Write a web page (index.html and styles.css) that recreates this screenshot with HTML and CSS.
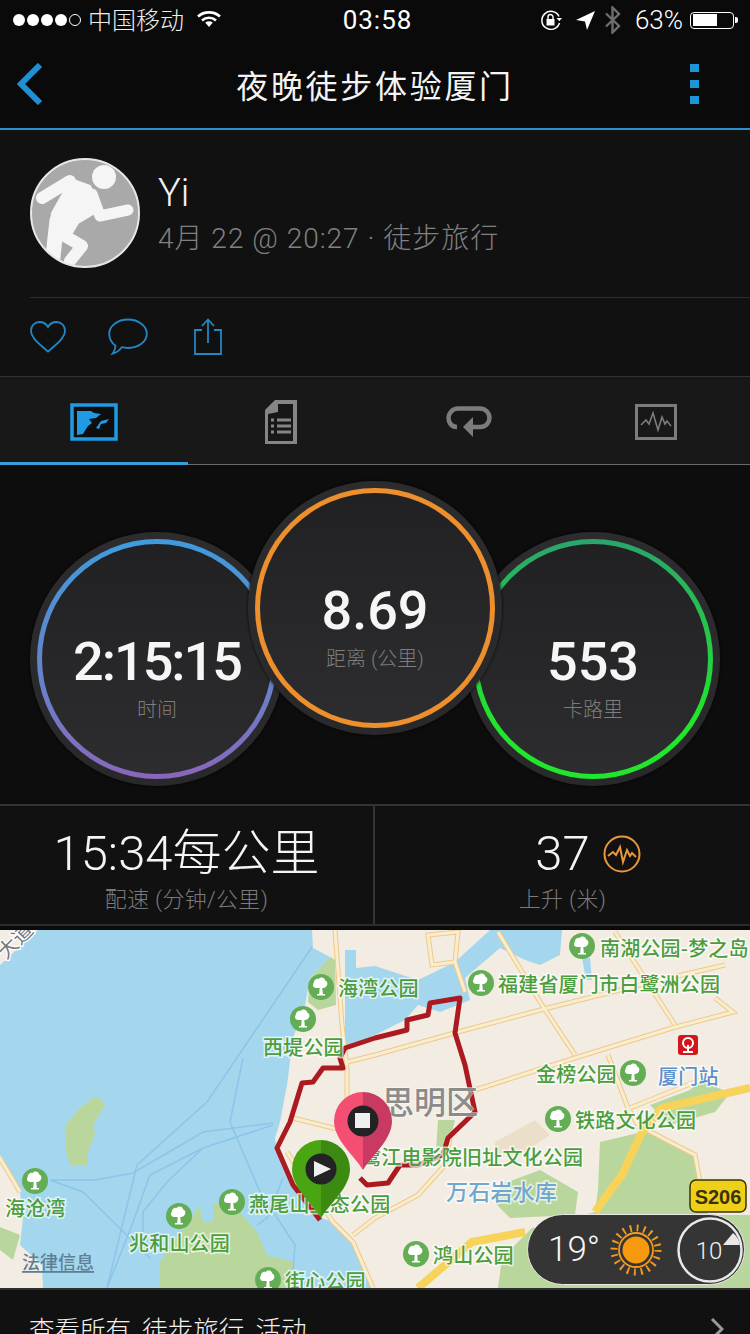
FILE: index.html
```html
<!DOCTYPE html>
<html lang="zh-CN">
<head>
  <meta charset="UTF-8" />
  <title>夜晚徒步体验厦门</title>
  <link rel="stylesheet" href="styles.css">
</head>
<body>
<div class="page">

  <div class="status-bar">
    <div class="status-left">
      <div class="signal"><i></i><i></i><i></i><i></i><i class="off"></i></div>
      <span class="carrier">中国移动</span>
      <svg class="wifi" width="24" height="18" viewBox="0 0 24 18"><path d="M1 6.5C7 1 17 1 23 6.5M5 10.5c4-3.6 10-3.6 14 0" fill="none" stroke="#fff" stroke-width="2.6"/><path d="M8.2 12.6c2.2-1.7 5.4-1.7 7.6 0L12 17z" fill="#fff"/></svg>
    </div>
    <div class="clock">03:58</div>
    <div class="status-right">
      <svg width="23" height="20" viewBox="0 0 23 20"><path d="M19 6.5A9 9 0 1 0 19.5 13" fill="none" stroke="#fff" stroke-width="1.5"/><path d="M16.5 8h5.5l-2.700 3.200z" fill="#fff"/><rect x="6.5" y="9" width="8" height="6.5" fill="#fff"/><path d="M8 9V7a2.5 2.5 0 0 1 5 0v2" fill="none" stroke="#fff" stroke-width="1.4"/></svg>
      <svg class="loc" width="19" height="19" viewBox="0 0 19 19"><path d="M19 0L0 9l9 1.5L11 19z" fill="#fff"/></svg>
      <svg class="bt" width="17" height="28" viewBox="0 0 17 28"><path d="M2 7.5l13 12.500-6.500 6.500V1.500L15 8 2 20.500" fill="none" stroke="#6e6e6e" stroke-width="2.4"/></svg>
      <span class="battery-pct">63%</span>
      <div class="battery"><div class="battery-fill"></div></div>
    </div>
  </div>

  <div class="nav-bar">
    <svg class="back" width="26" height="42" viewBox="0 0 26 42"><path d="M23 2L4 21l19 19" fill="none" stroke="#1f8fd6" stroke-width="6"/></svg>
    <h1 class="nav-title">夜晚徒步体验厦门</h1>
    <div class="kebab"><i></i><i></i><i></i></div>
  </div>

  <div class="profile">
    <div class="user-row">
      <svg class="avatar" width="110" height="110" viewBox="0 0 110 110">
        <defs><clipPath id="avatarClip"><circle cx="55" cy="55" r="54"/></clipPath></defs>
        <circle cx="55" cy="55" r="54" fill="#a9a9a9"/>
        <g class="runner" clip-path="url(#avatarClip)" fill="#f5f5f5" stroke="#f5f5f5" stroke-linecap="round" stroke-linejoin="round">
          <circle cx="74" cy="19" r="12" stroke="none"/>
          <path d="M38 20l22 8 10 24-22 13-6 10H20l2-20 13-23z" stroke-width="2"/>
          <path d="M12 40l28-17" fill="none" stroke-width="12"/>
          <path d="M70 58l28-6M62 36l8 22" fill="none" stroke-width="11"/>
          <path d="M33 77l19 11-12 15" fill="none" stroke-width="12"/>
          <path d="M27 62l-5 46" fill="none" stroke-width="15"/>
        </g>
        <circle cx="55" cy="55" r="54" fill="none" stroke="#e6e6e6" stroke-width="2"/>
      </svg>
      <div class="user-text">
        <div class="user-name">Yi</div>
        <div class="user-meta">4月 22 @ 20:27 · 徒步旅行</div>
      </div>
    </div>
    <div class="actions">
      <svg width="36" height="32" viewBox="0 0 36 32"><path d="M18 30.5C10 23.5 1 17 1 9.5 1 4.5 5 1 9.5 1c3.5 0 6.7 1.8 8.5 5 1.8-3.2 5-5 8.5-5C31 1 35 4.5 35 9.5c0 7.5-9 14-17 21z" fill="none" stroke="#2387c4" stroke-width="1.8"/></svg>
      <svg width="40" height="37" viewBox="0 0 40 37"><path d="M20 1.5c10.5 0 18.800 6.500 18.800 14.300S30.500 30 20 30c-2.200 0-4.300-.3-6.200-.8-2 2.700-5 5.300-9.300 6.500 1.800-2.300 2.900-5 3-8C3.800 25 1.200 20.600 1.200 15.800 1.200 8 9.500 1.500 20 1.500z" fill="none" stroke="#2387c4" stroke-width="1.8"/></svg>
      <svg width="36" height="37" viewBox="0 0 36 37"><path d="M12 12H5v24h26V12h-7" fill="none" stroke="#2387c4" stroke-width="1.8"/><path d="M18 25V2M12 8l6-6.500L24 8" fill="none" stroke="#2387c4" stroke-width="1.8"/></svg>
    </div>
  </div>

  <div class="tabs">
    <div class="tab active">
      <svg width="48" height="38" viewBox="0 0 48 38"><rect x="2" y="2" width="44" height="34" fill="#0e0e0f" stroke="#1e9be2" stroke-width="3.5"/><path d="M7 8h14l3 2 7 1-5 4-7 1 3 4-4 3-2 3-3 5-6 1z" fill="#1e9be2"/><path d="M26 25l5-7 8-2-3 4-5 1-2 5z" fill="#1e9be2"/></svg>
    </div>
    <div class="tab">
      <svg width="32" height="44" viewBox="0 0 32 44"><path d="M10 0h22v44H0V10z" fill="#858585"/><path d="M13 4h15v37H3V14l10-2z" fill="#171718"/><rect x="6" y="18.5" width="3" height="3" fill="#858585"/><rect x="6" y="24.5" width="3" height="3" fill="#858585"/><rect x="6" y="30.5" width="3" height="3" fill="#858585"/><rect x="12" y="18.5" width="14" height="3" fill="#858585"/><rect x="12" y="24.5" width="14" height="3" fill="#858585"/><rect x="12" y="30.5" width="14" height="3" fill="#858585"/></svg>
    </div>
    <div class="tab">
      <svg width="46" height="32" viewBox="0 0 46 32"><path d="M11 21C5 21 2.5 16 2.5 12S6 2.500 12 2.500h22c6 0 9.500 5 9.500 9.500S40 21 34 21h-9" fill="none" stroke="#7c7c7c" stroke-width="4.5"/><path d="M27 11v20L17 21z" fill="#7c7c7c"/></svg>
    </div>
    <div class="tab">
      <svg width="42" height="36" viewBox="0 0 42 36"><rect x="1.5" y="1.5" width="39" height="33" fill="none" stroke="#7c7c7c" stroke-width="3"/><path d="M6 21l5-5 3 4 4-11 5 17 4-13 3 7 2-3 4 5" fill="none" stroke="#7c7c7c" stroke-width="1.6"/></svg>
    </div>
  </div>

  <div class="rings">
    <div class="ring-wrap side">
      <div class="ring ring-blue">
        <div class="ring-inner">
          <div class="ring-value time-value">2:15:15</div>
          <div class="ring-label">时间</div>
        </div>
      </div>
    </div>
    <div class="ring-wrap center">
      <div class="ring ring-orange">
        <div class="ring-inner">
          <div class="ring-value">8.69</div>
          <div class="ring-label">距离 (公里)</div>
        </div>
      </div>
    </div>
    <div class="ring-wrap side">
      <div class="ring ring-green">
        <div class="ring-inner">
          <div class="ring-value">553</div>
          <div class="ring-label">卡路里</div>
        </div>
      </div>
    </div>
  </div>

  <div class="stats">
    <div class="stat">
      <div class="stat-value">15:34每公里</div>
      <div class="stat-label">配速 (分钟/公里)</div>
    </div>
    <div class="stat">
      <div class="stat-value"><span class="stat-number">37
        <svg class="stat-icon" width="38" height="38" viewBox="0 0 38 38"><circle cx="19" cy="19" r="17.5" fill="none" stroke="#e8983a" stroke-width="2"/><path d="M5 21l5-4 3 3 4-8 3 15 4-12 3 6 2-3 4 4" fill="none" stroke="#e8983a" stroke-width="2"/></svg>
      </span></div>
      <div class="stat-label">上升 (米)</div>
    </div>
  </div>

  <div class="map">
    <svg class="map-canvas" width="750" height="358" viewBox="0 0 750 358">
      <rect width="750" height="358" fill="#a4d7ee"/>

      <!-- land -->
      <path class="land" d="M312 0L313 18 330 27 310 48 305 75 293 108 287 155 280 192 275 208 277 222 293 255 313 285 333 292 353 312 373 358H750V0z"/>
      <path class="land" d="M0 0H38L0 35z"/>
      <path class="land" d="M0 225L20 262 23 288 20 315 42 335 43 358H0z"/>
      <path class="green" d="M0 297L20 305 13 330 0 320z"/>

      <!-- water inside the city -->
      <path class="water" d="M345 20L356 20 356 38 375 36 418 50 455 32 490 0 522 0 562 0 560 25 540 35 525 30 500 18 465 48 470 70 440 82 418 75 405 90 375 105 345 118z"/>
      <path class="water" d="M582 28L590 28 592 50 586 50z"/>

      <!-- parks -->
      <path class="green" d="M100 168L105 175 93 195 95 205 88 222 87 235 70 235 65 218 65 195 80 178 93 168z"/>
      <path class="green" d="M160 358L160 332 173 312 187 295 200 275 202 292 213 292 213 272 240 282 257 302 267 325 293 332 293 358z"/>
      <path class="green" d="M310 48L330 27 335 30 336 75 318 80 308 72z"/>
      <path class="green" d="M600 212L642 202 650 202 695 225 700 252 708 285 750 285V358H498L502 328 532 298 595 282 598 260z"/>
      <path class="green" d="M650 175L690 160 700 150 730 163 715 182 670 195z"/>
      <path class="green" d="M500 255L540 240 578 262 575 285 510 288 497 275z"/>
      <path class="green" d="M438 190L455 190 450 210 436 222z"/>
      <path class="tan" d="M495 212L535 190 550 205 520 225 495 225z"/>

      <!-- sea lanes -->
      <path class="lane" d="M312 17L207 172 137 235 107 358"/>
      <path class="lane" d="M243 128L230 192 260 262 295 315 293 342"/>
      <path class="lane" d="M50 250L95 250 133 243 203 202 273 193"/>
      <path class="lane" d="M50 250L83 262 150 328"/>
      <path class="lane" d="M273 195L203 218 150 245 132 295 107 358"/>
      <path class="lane" d="M283 248L267 288 257 295"/>
      <path class="lane" d="M143 305L143 282 167 252 203 218"/>

      <!-- roads -->
      <g class="road-outline">
        <path d="M347 132L375 125 458 102 548 78 660 50 725 35"/>
        <path d="M475 160L578 127 672 98 733 82 715 68"/>
        <path d="M335 0L342 95 347 138 347 170"/>
        <path d="M293 188L333 198 347 200"/>
        <path d="M287 222L333 292 353 312 373 358"/>
        <path d="M353 305L375 288 418 265 445 235 450 208"/>
        <path d="M455 32L465 62"/>
        <path d="M498 2L542 75 575 125"/>
        <path d="M608 125L628 178 642 202"/>
        <path d="M615 2L675 95"/>
        <path d="M428 5L458 2 455 32 432 35z"/>
        <path d="M647 200L695 225 700 252"/>
        <path d="M0 228L20 262"/>
        <path d="M630 178L700 150"/>
      </g>
      <g class="road-inner">
        <path d="M347 132L375 125 458 102 548 78 660 50 725 35"/>
        <path d="M475 160L578 127 672 98 733 82 715 68"/>
        <path d="M335 0L342 95 347 138 347 170"/>
        <path d="M293 188L333 198 347 200"/>
        <path d="M287 222L333 292 353 312 373 358"/>
        <path d="M353 305L375 288 418 265 445 235 450 208"/>
        <path d="M455 32L465 62"/>
        <path d="M498 2L542 75 575 125"/>
        <path d="M608 125L628 178 642 202"/>
        <path d="M615 2L675 95"/>
        <path d="M428 5L458 2 455 32 432 35z"/>
        <path d="M647 200L695 225 700 252"/>
        <path d="M0 228L20 262"/>
        <path d="M630 178L700 150"/>
      </g>
      <g class="highway">
        <path d="M750 158L662 178 642 202 622 245 602 272 595 282"/>
        <path d="M418 358L472 312 525 302"/>
      </g>
      <text class="road-text" transform="translate(6 30) rotate(-45)">大道</text>

      <!-- route -->
      <path class="route" d="M320 290L293 255 277 218 290 192 302 153 313 152 323 138 343 138 340 128 345 118 375 108 407 100 407 90 428 85 430 73 460 68 455 103 465 135 475 182 448 208 443 225 418 235 400 235 388 253 367 255 360 248"/>

      <!-- labels -->
      <text class="place" x="338" y="57">海湾公园</text>
      <text class="place" x="263" y="116">西堤公园</text>
      <text class="place" x="5" y="277">海沧湾</text>
      <text class="place" x="249" y="273">燕尾山生态公园</text>
      <text class="place" x="129" y="312">兆和山公园</text>
      <text class="place" x="285" y="350">街心公园</text>
      <text class="place" x="600" y="17">南湖公园-梦之岛</text>
      <text class="place" x="498" y="53">福建省厦门市白鹭洲公园</text>
      <text class="place" x="536" y="143">金榜公园</text>
      <text class="place" x="575" y="189">铁路文化公园</text>
      <text class="place" x="361" y="226">鹭江电影院旧址文化公园</text>
      <text class="place" x="433" y="324">鸿山公园</text>
      <text class="place blue-place" x="658" y="145">厦门站</text>
      <text class="place lake-place" x="446" y="260">万石岩水库</text>
      <text class="district" x="382" y="170">思明区</text>
      <text class="legal" x="22" y="331">法律信息</text>

      <!-- park markers -->
      <defs>
        <g id="park">
          <circle r="13" fill="#63ad55"/>
          <path d="M-1.3 1h-3.500c-3 0-4-3-2.500-5 0-3 3-5 5-4 2-2.500 6-1.500 6.500 1.500 2.500 1 3 4 1 6-1 1-2.500 1.500-4 1.500H1.300L1.800 7H4v1.500h-8V7h2.200z" fill="#fff"/>
        </g>
      </defs>
      <use href="#park" x="321" y="57"/>
      <use href="#park" x="303" y="89"/>
      <use href="#park" x="35" y="251"/>
      <use href="#park" x="232" y="272"/>
      <use href="#park" x="179" y="286"/>
      <use href="#park" x="268" y="350"/>
      <use href="#park" x="582" y="16"/>
      <use href="#park" x="481" y="53"/>
      <use href="#park" x="633" y="143"/>
      <use href="#park" x="558" y="189"/>
      <use href="#park" x="416" y="324"/>

      <!-- railway station -->
      <rect x="678" y="105" width="20" height="20" rx="3" fill="#d3151e"/>
      <circle cx="688" cy="113" r="5" fill="none" stroke="#fff" stroke-width="2"/>
      <path d="M688 115v6M683 122h10" stroke="#fff" stroke-width="2" fill="none"/>

      <!-- road sign -->
      <rect x="690" y="250" width="56" height="32" rx="6" fill="#efd019" stroke="#3b3208" stroke-width="1.5"/>
      <text class="sign" x="718" y="267">S206</text>

      <!-- end pin -->
      <path d="M363 162a29 29 0 0 0-29 29c0 19 20 34 29 49z" fill="#f44f73"/>
      <path d="M363 162a29 29 0 0 1 29 29c0 19-20 34-29 49z" fill="#c93a62"/>
      <circle cx="363" cy="191" r="15.5" fill="#232326"/>
      <rect x="355" y="183" width="15" height="15" fill="#efefef"/>

      <!-- start pin -->
      <path d="M321 210a29 29 0 0 0-29 29c0 19 20 34 29 49z" fill="#49a512"/>
      <path d="M321 210a29 29 0 0 1 29 29c0 19-20 34-29 49z" fill="#3c8a12"/>
      <circle cx="321" cy="239" r="15.5" fill="#232326"/>
      <path d="M314 231v16l17-8z" fill="#efefef"/>
    </svg>

    <div class="weather">
      <span class="temp">19°</span>
      <svg class="sun" width="52" height="52" viewBox="0 0 52 52">
        <circle cx="26" cy="26" r="22" fill="none" stroke="#f19a1e" stroke-width="7" stroke-dasharray="1.9 5.011"/>
        <circle cx="26" cy="26" r="17" fill="#353535" stroke="#f19a1e" stroke-width="1.8"/>
        <circle cx="26" cy="26" r="13.5" fill="#f6990f"/>
      </svg>
      <svg class="dial" width="68" height="68" viewBox="0 0 68 68">
        <path d="M47 29H64C63 24 61 20 57 17z" fill="#e8e8e8"/>
        <circle cx="34" cy="34" r="31.5" fill="none" stroke="#e8e8e8" stroke-width="2.5"/>
        <text class="dial-text" x="33" y="35">10</text>
      </svg>
    </div>
  </div>

  <div class="footer-link">
    <span class="footer-text">查看所有 徒步旅行 活动</span>
    <svg class="footer-arrow" width="14" height="24" viewBox="0 0 14 24"><path d="M2 2l10 10L2 22" fill="none" stroke="#9a9a9a" stroke-width="3"/></svg>
  </div>

</div>
</body>
</html>
```

FILE: styles.css
```css
html, body {
  margin: 0;
  padding: 0;
  background: #0a0a0b;
}

.page {
  width: 750px;
  height: 1334px;
  overflow: hidden;
  background: #0a0a0b;
  color: #fff;
  font-family: "Roboto", "Noto Sans CJK SC", sans-serif;
}

svg {
  display: block;
}

/* status bar */

.status-bar {
  height: 40px;
  display: grid;
  grid-template-columns: 1fr auto 1fr;
  align-items: center;
  padding: 0 16px 0 13px;
  font-size: 24px;
}

.status-left {
  display: flex;
  align-items: center;
}

.signal {
  display: flex;
  gap: 2px;
  margin-right: 7px;
}

.signal i {
  width: 12px;
  height: 12px;
  border-radius: 50%;
  background: #fff;
  box-sizing: border-box;
}

.signal i.off {
  background: none;
  border: 1.5px solid #fff;
}

.carrier {
  font-weight: 300;
  color: #eee;
  margin-top: -3px;
}

.wifi {
  margin-left: 13px;
  margin-top: -2px;
}

.clock {
  font-size: 26px;
  letter-spacing: 1px;
  margin-left: 8px;
  margin-top: -1px;
}

.status-right {
  display: flex;
  align-items: center;
  justify-content: flex-end;
}

.loc {
  margin-left: 13px;
}

.bt {
  margin-left: 9px;
}

.battery-pct {
  margin-left: 14px;
  font-size: 26px;
  font-weight: 300;
}

.battery {
  position: relative;
  width: 44px;
  height: 17px;
  margin-left: 7px;
  border: 1.5px solid #fff;
  border-radius: 4px;
  box-sizing: border-box;
  padding: 1.5px;
}

.battery::after {
  content: "";
  position: absolute;
  right: -5px;
  top: 4px;
  width: 3px;
  height: 6px;
  background: #fff;
  border-radius: 0 2px 2px 0;
}

.battery-fill {
  width: 63%;
  height: 100%;
  background: #fff;
}

/* nav */

.nav-bar {
  height: 88px;
  display: grid;
  grid-template-columns: 1fr auto 1fr;
  align-items: center;
  padding: 0 51px 0 17px;
  border-bottom: 2px solid #2a8fce;
}

.nav-title {
  margin: 0 0 0 34px;
  font-size: 32px;
  font-weight: 400;
  letter-spacing: 2.7px;
  color: #f4f4f4;
}

.kebab {
  display: flex;
  flex-direction: column;
  gap: 8px;
  justify-self: end;
}

.kebab i {
  width: 9px;
  height: 8px;
  background: #1f93d8;
}

/* profile */

.profile {
  height: 247px;
  background: #111112;
  border-bottom: 1px solid #333;
  box-sizing: border-box;
  padding: 28px 0 0 30px;
}

.user-row {
  display: flex;
  align-items: flex-start;
  height: 139px;
  border-bottom: 1px solid #2c2c2c;
}

.user-text {
  margin-left: 18px;
  padding-top: 13px;
}

.user-name {
  font-size: 38px;
  font-weight: 300;
  line-height: 44px;
  color: #f2f2f2;
}

.user-meta {
  margin-top: 6px;
  font-size: 28px;
  font-weight: 300;
  line-height: 36px;
  letter-spacing: 1px;
  color: #808080;
}

.actions {
  display: flex;
  align-items: center;
  gap: 42px;
  padding-top: 20px;
}

/* tabs */

.tabs {
  height: 88px;
  display: grid;
  grid-template-columns: repeat(4, 1fr);
  background: #181819;
  border-bottom: 1px solid #6a6a6a;
  box-sizing: border-box;
}

.tab {
  display: flex;
  align-items: center;
  justify-content: center;
  padding-top: 3px;
}

.tab.active {
  box-shadow: 0 1px 0 #3a9ede, inset 0 -2px 0 #3a9ede;
}

/* rings */

.rings {
  height: 339px;
  box-sizing: border-box;
  padding-top: 16px;
  display: flex;
  justify-content: center;
  align-items: flex-start;
  background: #0d0d0e;
}

.ring-wrap {
  width: 254px;
  height: 254px;
  box-sizing: border-box;
  padding: 7px;
  border-radius: 50%;
  background: linear-gradient(#2c2c2e, #29292b);
  box-shadow: 0 0 3px #000;
  flex: none;
}

.ring-wrap.side {
  margin-top: 51px;
}

.ring-wrap.center {
  margin: 0 -36px;
  position: relative;
  z-index: 2;
}

.ring {
  width: 100%;
  height: 100%;
  box-sizing: border-box;
  padding: 5px;
  border-radius: 50%;
}

.ring-blue {
  background: linear-gradient(#3f9bdc, #6b7fc8 65%, #8a66bb);
}

.ring-orange {
  background: #ec8f2c;
}

.ring-green {
  background: linear-gradient(#2aa56b, #20e62c 75%);
}

.ring-inner {
  width: 100%;
  height: 100%;
  box-sizing: border-box;
  padding-top: 88px;
  border-radius: 50%;
  background: linear-gradient(#212123, #2d2d2f);
  text-align: center;
}

.ring-value {
  font-size: 54px;
  font-weight: 500;
  line-height: 60px;
  color: #f6f6f6;
}

.time-value {
  letter-spacing: -2px;
}

.ring-label {
  margin-top: 4px;
  font-size: 20px;
  font-weight: 300;
  line-height: 28px;
  color: #7d7d7d;
}

/* stats */

.stats {
  height: 122px;
  box-sizing: border-box;
  display: grid;
  grid-template-columns: 375px 375px;
  background: #111112;
  border-top: 2px solid #333;
  border-bottom: 2px solid #2c2c2c;
}

.stat {
  text-align: center;
  padding-top: 18px;
}

.stat:first-child {
  border-right: 2px solid #333;
}

.stat-value {
  font-size: 49px;
  font-weight: 300;
  line-height: 60px;
  color: #f4f4f4;
}

.stat-number {
  position: relative;
}

.stat-icon {
  position: absolute;
  left: calc(100% + 13px);
  top: 50%;
  margin-top: -19px;
}

.stat-label {
  margin-top: 1px;
  font-size: 22px;
  font-weight: 300;
  line-height: 30px;
  letter-spacing: .3px;
  color: #7a7a7a;
}

/* map */

.map {
  position: relative;
  height: 358px;
  margin-top: 4px;
}

.land { fill: #f2ece2; }
.water { fill: #a4d7ee; }
.green { fill: #b9d79c; }
.tan { fill: #ebdfc9; }

.lane {
  fill: none;
  stroke: #8cc5ea;
  stroke-width: 1.5;
}

.road-outline path {
  fill: none;
  stroke: #ecc98f;
  stroke-width: 5;
}

.road-inner path {
  fill: none;
  stroke: #faedcb;
  stroke-width: 3;
}

.highway path {
  fill: none;
  stroke: #f7d35a;
  stroke-width: 8;
}

.route {
  fill: none;
  stroke: #ab1a20;
  stroke-width: 5;
  stroke-linejoin: round;
}

.map-canvas text {
  font-family: "Noto Sans CJK SC", sans-serif;
}

.map-canvas .road-text {
  font-size: 20px;
  fill: #777;
  stroke: #fff;
  stroke-width: 2.5px;
  paint-order: stroke;
}

.place {
  font-size: 20px;
  font-weight: 500;
  letter-spacing: .2px;
  fill: #4b9e3d;
  stroke: rgba(255, 255, 255, .7);
  stroke-width: 3px;
  paint-order: stroke;
  dominant-baseline: central;
}

.blue-place {
  fill: #5d90cd;
}

.lake-place {
  font-size: 22px;
  fill: #6fa7cf;
}

.district {
  font-size: 32px;
  font-weight: 500;
  fill: #8b8b8b;
  stroke: rgba(255, 255, 255, .5);
  stroke-width: 2px;
  paint-order: stroke;
  dominant-baseline: central;
}

.legal {
  font-size: 18px;
  font-weight: 500;
  fill: #5e7f95;
  text-decoration: underline;
  dominant-baseline: central;
}

.map-canvas .sign {
  font-family: "Liberation Sans", sans-serif;
  font-size: 20px;
  font-weight: 700;
  fill: #3b3208;
  text-anchor: middle;
  dominant-baseline: central;
}

.weather {
  position: absolute;
  left: 527px;
  top: 284px;
  width: 218px;
  height: 71px;
  box-sizing: border-box;
  display: flex;
  align-items: center;
  padding-left: 20px;
  background: #353535;
  border: 1px solid #e8e8e8;
  border-radius: 36px;
}

.temp {
  width: 62px;
  font-size: 35px;
  font-weight: 300;
  color: #f6f6f6;
}

.dial {
  margin-left: 14px;
}

.dial-text {
  font-family: "Roboto", sans-serif;
  font-size: 24px;
  font-weight: 300;
  fill: #f2f2f2;
  text-anchor: middle;
  dominant-baseline: central;
}

/* footer */

.footer-link {
  height: 46px;
  display: flex;
  align-items: flex-start;
  justify-content: space-between;
  padding: 27px 26px 0 29px;
  box-sizing: border-box;
  background: #111112;
  border-top: 2px solid #2c2c2c;
  overflow: hidden;
}

.footer-text {
  font-size: 25.5px;
  font-weight: 300;
  line-height: 26px;
  word-spacing: 5px;
  color: #f2f2f2;
}
```
